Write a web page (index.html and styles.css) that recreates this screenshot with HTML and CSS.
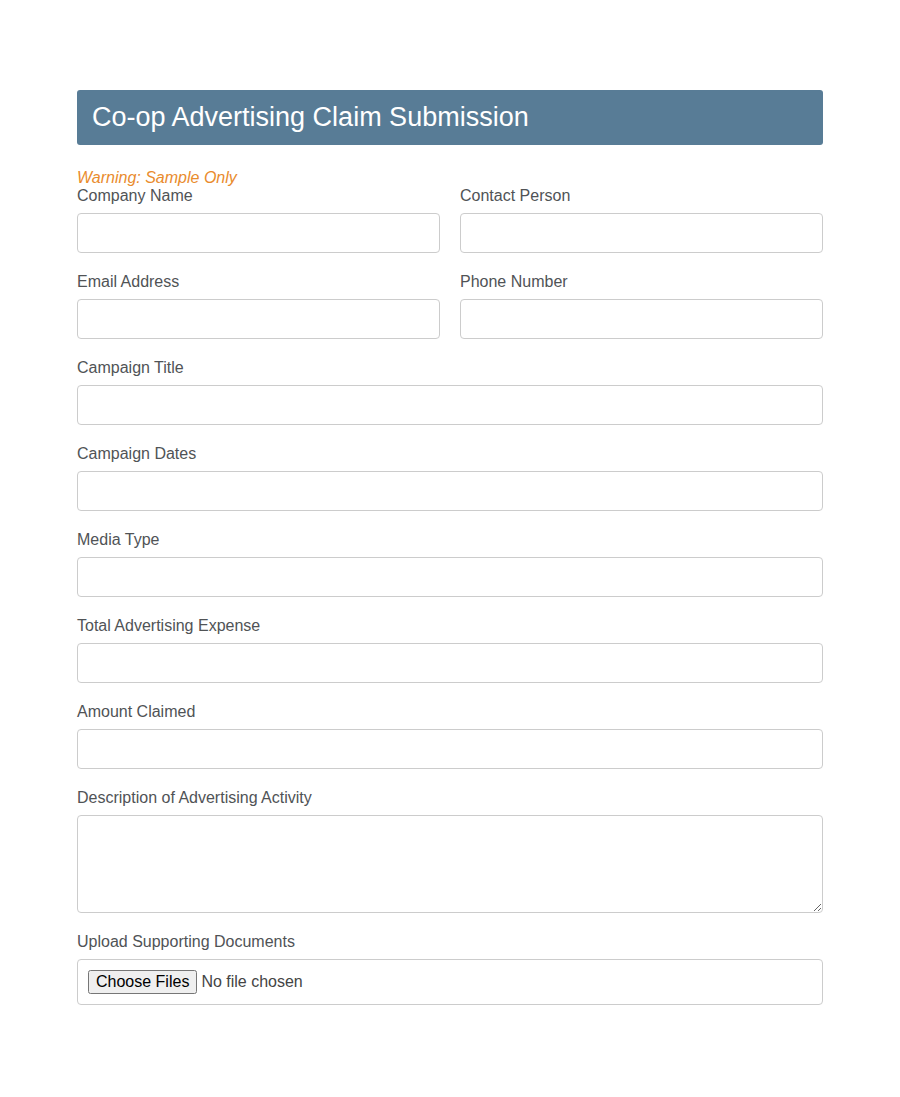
FILE: index.html
```html
<!DOCTYPE html>
<html lang="en">
<head>
<meta charset="utf-8">
<title>Co-op Advertising Claim Submission</title>
<link rel="stylesheet" href="styles.css">
</head>
<body>
<div class="container">
  <h1 class="title">Co-op Advertising Claim Submission</h1>
  <form class="form">
    <div class="warning">Warning: Sample Only</div>
    <div class="row">
      <div class="group">
        <label class="label" for="company">Company Name</label>
        <input class="field" type="text" id="company">
      </div>
      <div class="group">
        <label class="label" for="contact">Contact Person</label>
        <input class="field" type="text" id="contact">
      </div>
    </div>
    <div class="row">
      <div class="group">
        <label class="label" for="email">Email Address</label>
        <input class="field" type="email" id="email">
      </div>
      <div class="group">
        <label class="label" for="phone">Phone Number</label>
        <input class="field" type="tel" id="phone">
      </div>
    </div>
    <div class="group">
      <label class="label" for="ctitle">Campaign Title</label>
      <input class="field" type="text" id="ctitle">
    </div>
    <div class="group">
      <label class="label" for="cdates">Campaign Dates</label>
      <input class="field" type="text" id="cdates">
    </div>
    <div class="group">
      <label class="label" for="media">Media Type</label>
      <input class="field" type="text" id="media">
    </div>
    <div class="group">
      <label class="label" for="expense">Total Advertising Expense</label>
      <input class="field" type="text" id="expense">
    </div>
    <div class="group">
      <label class="label" for="amount">Amount Claimed</label>
      <input class="field" type="text" id="amount">
    </div>
    <div class="group">
      <label class="label" for="desc">Description of Advertising Activity</label>
      <textarea class="field area" id="desc"></textarea>
    </div>
    <div class="group">
      <label class="label" for="docs">Upload Supporting Documents</label>
      <input class="field file" type="file" id="docs" multiple>
    </div>
  </form>
</div>
</body>
</html>
```
FILE: styles.css
```css
html, body {
  margin: 0;
  padding: 0;
  background: #ffffff;
}
body {
  font-family: "Liberation Sans", Arial, sans-serif;
  color: #555555;
}
.container {
  width: 746px;
  margin: 90px auto 0;
}
.title {
  margin: 0;
  height: 55px;
  box-sizing: border-box;
  padding: 0 15px;
  display: flex;
  align-items: center;
  background: #587c96;
  color: #ffffff;
  border-radius: 3px;
  font-size: 27px;
  font-weight: normal;
}
.form {
  margin-top: 24px;
  display: flex;
  flex-direction: column;
}
.warning {
  font-style: italic;
  color: #e98b2d;
  font-size: 16px;
  line-height: 18px;
}
.row {
  display: grid;
  grid-template-columns: 1fr 1fr;
  gap: 20px;
}
.group {
  display: flex;
  flex-direction: column;
  margin-bottom: 20px;
}
.label {
  font-size: 16px;
  line-height: 18px;
  margin-bottom: 8px;
  color: #505356;
}
.field {
  box-sizing: border-box;
  width: 100%;
  height: 40px;
  border: 1px solid #cccccc;
  border-radius: 4px;
  padding: 8px 10px;
  font-family: "Liberation Sans", Arial, sans-serif;
  font-size: 16px;
  background: #ffffff;
  margin: 0;
}
.area {
  height: 98px;
  resize: vertical;
}
.file {
  height: 46px;
  padding: 10px;
  color: #444444;
}
```
